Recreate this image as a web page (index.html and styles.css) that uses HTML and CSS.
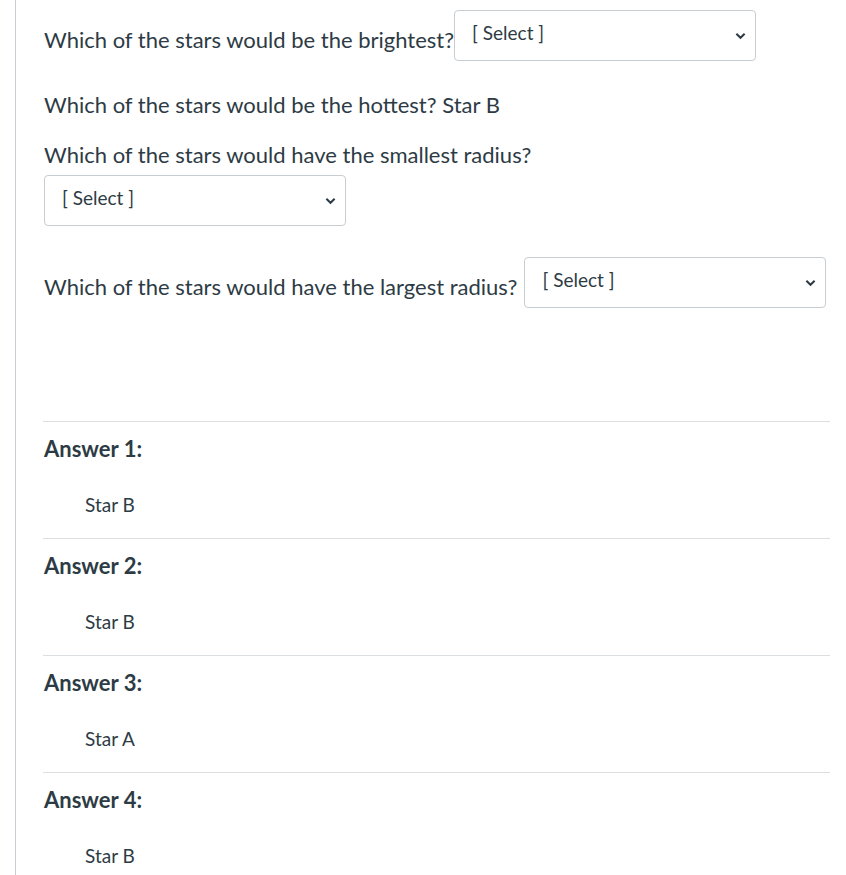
FILE: index.html
```html
<!DOCTYPE html>
<html>
<head>
<meta charset="utf-8">
<link rel="stylesheet" href="styles.css">
</head>
<body>
<div class="page">
  <div class="content">
    <div class="row row1">
      <span class="q">Which of the stars would be the brightest?</span>
      <div class="select"><span>[ Select ]</span><svg class="chev" viewBox="0 0 12 8" width="11" height="8"><path d="M1.5 1.5 L6 6 L10.5 1.5" fill="none" stroke="#2d3b45" stroke-width="2.2"/></svg></div>
    </div>
    <p class="q line2">Which of the stars would be the hottest? Star B</p>
    <p class="q line3">Which of the stars would have the smallest radius?</p>
    <div class="select sel3"><span>[ Select ]</span><svg class="chev" viewBox="0 0 12 8" width="11" height="8"><path d="M1.5 1.5 L6 6 L10.5 1.5" fill="none" stroke="#2d3b45" stroke-width="2.2"/></svg></div>
    <div class="row row4">
      <span class="q">Which of the stars would have the largest radius?</span>
      <div class="select"><span>[ Select ]</span><svg class="chev" viewBox="0 0 12 8" width="11" height="8"><path d="M1.5 1.5 L6 6 L10.5 1.5" fill="none" stroke="#2d3b45" stroke-width="2.2"/></svg></div>
    </div>
    <div class="answers">
      <div class="answer"><div class="label">Answer 1:</div><div class="val">Star B</div></div>
      <div class="answer"><div class="label">Answer 2:</div><div class="val">Star B</div></div>
      <div class="answer"><div class="label">Answer 3:</div><div class="val">Star A</div></div>
      <div class="answer"><div class="label">Answer 4:</div><div class="val">Star B</div></div>
    </div>
  </div>
</div>
</body>
</html>
```

FILE: styles.css
```css
html, body {
  margin: 0;
  padding: 0;
  background: #ffffff;
}
body {
  font-family: Lato, "Open Sans", sans-serif;
  color: #2d3b45;
  height: 875px;
  overflow: hidden;
}
.page {
  margin-left: 15px;
  border-left: 1px solid #c7cdd1;
  min-height: 875px;
  width: 816px;
}
.content {
  padding-left: 28px;
  padding-top: 10px;
}
.q {
  font-size: 22px;
  line-height: 30px;
  margin: 0;
}
.row {
  display: flex;
  align-items: flex-start;
}
.row .q {
  margin-top: 15px;
}
.select {
  box-sizing: border-box;
  width: 302px;
  height: 51px;
  border: 1px solid #c7cdd1;
  border-radius: 4px;
  background: #fff;
  display: flex;
  align-items: flex-start;
  justify-content: space-between;
  padding: 9px 9px 0 17px;
  font-size: 19px;
  line-height: 26px;
}
.row1 .select {
  margin-left: 0;
}
.row4 .select {
  margin-left: 7px;
}
.chev {
  margin-top: 12px;
}
.line2 {
  margin-top: 29px;
}
.line3 {
  margin-top: 20px;
}
.sel3 {
  margin-top: 5px;
}
.row4 {
  margin-top: 31px;
}
.answers {
  margin-top: 113px;
  margin-left: -1px;
  width: 787px;
}
.answer {
  border-top: 1px solid #dcdfe2;
  padding-top: 12px;
  padding-bottom: 20px;
}
.label {
  font-weight: bold;
  font-size: 22px;
  line-height: 30px;
  padding-left: 1px;
}
.val {
  margin-top: 28px;
  font-size: 19px;
  line-height: 26px;
  padding-left: 42px;
}
```
